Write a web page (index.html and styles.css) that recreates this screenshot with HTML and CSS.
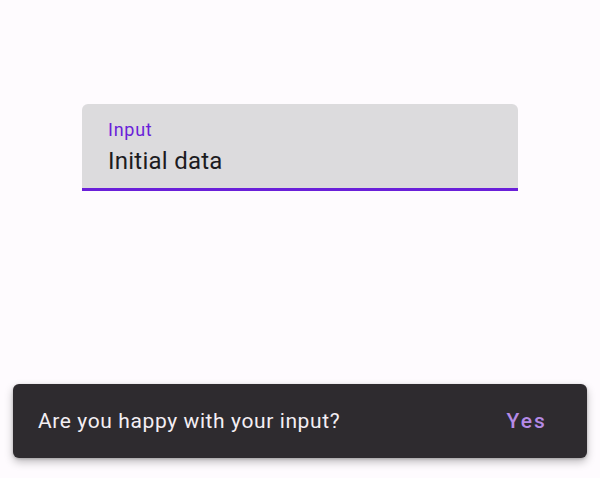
FILE: index.html
```html
<!DOCTYPE html>
<html>
<head>
<meta charset="utf-8">
<link rel="stylesheet" href="styles.css">
</head>
<body>
<div class="page">
  <div class="field">
    <div class="label">Input</div>
    <div class="value">Initial data</div>
  </div>
  <div class="snackbar">
    <span class="message">Are you happy with your input?</span>
    <span class="action">Yes</span>
  </div>
</div>
</body>
</html>
```
FILE: styles.css
```css
html, body {
  margin: 0;
  padding: 0;
  background: #fefbfe;
}
.page {
  height: 478px;
  display: flex;
  flex-direction: column;
  align-items: center;
  font-family: Roboto, "Liberation Sans", sans-serif;
  box-sizing: border-box;
}
.field {
  margin-top: 104px;
  width: 436px;
  box-sizing: border-box;
  padding: 14px 26px 11px;
  background: #dcdbdd;
  border-radius: 6px 6px 0 0;
  border-bottom: 3px solid #6a1fd9;
}
.label {
  font-size: 18px;
  line-height: 24px;
  letter-spacing: 0.75px;
  color: #6a1fd9;
}
.value {
  margin-top: 3px;
  font-size: 24px;
  line-height: 32px;
  letter-spacing: 0.25px;
  color: #1c1b1f;
}
.snackbar {
  margin-top: auto;
  margin-bottom: 20px;
  width: 574px;
  height: 74px;
  box-sizing: border-box;
  background: #2e2b2f;
  border-radius: 6px;
  display: flex;
  align-items: center;
  justify-content: space-between;
  padding: 0 40px 0 25px;
  box-shadow: 0 4px 8px rgba(0,0,0,0.25), 0 1px 3px rgba(0,0,0,0.2);
}
.message {
  font-size: 21px;
  line-height: 28px;
  letter-spacing: 0.6px;
  color: #f4eff4;
}
.action {
  font-size: 21px;
  line-height: 28px;
  font-weight: 500;
  letter-spacing: 2.1px;
  color: #b58ae6;
}
```
